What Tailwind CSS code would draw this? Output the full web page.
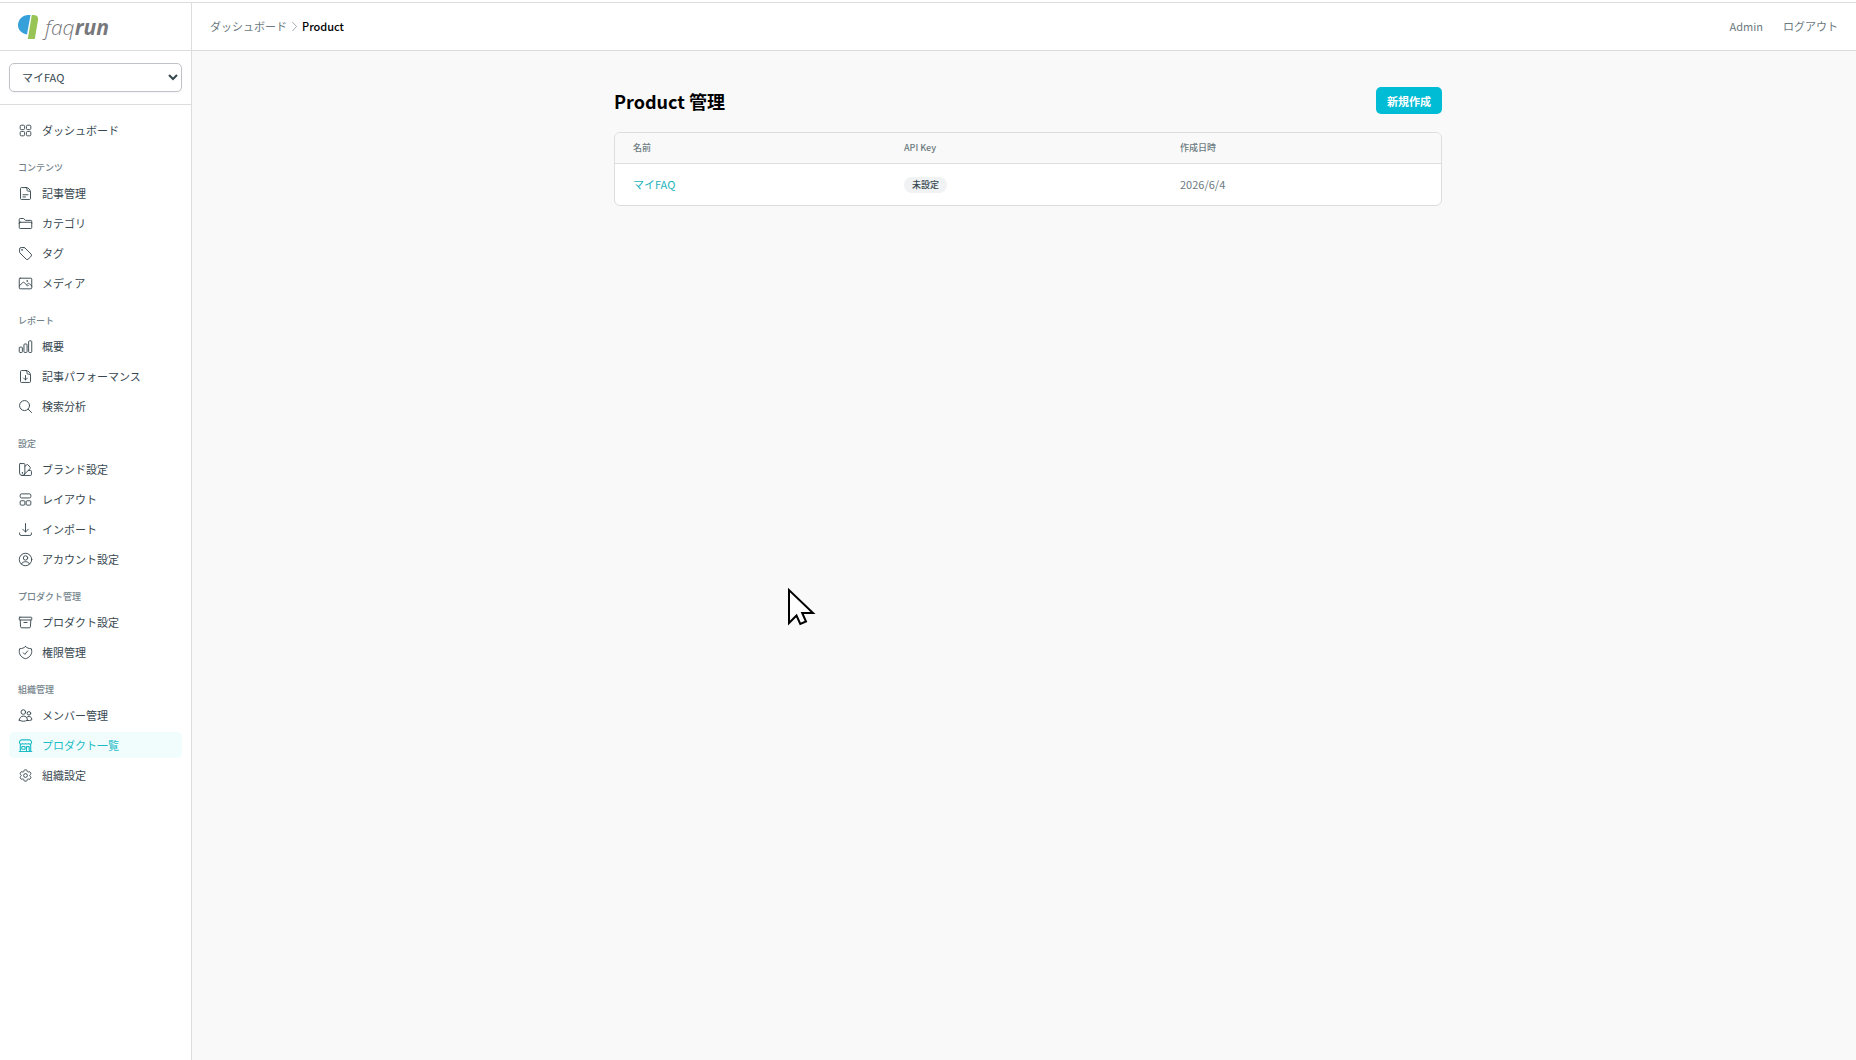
<!DOCTYPE html>
<html lang="ja">
<head>
  <meta charset="UTF-8" />
  <meta name="viewport" content="width=device-width, initial-scale=1.0" />
  <title>Product 管理 - faqrun</title>
  <script src="https://cdn.jsdelivr.net/npm/@tailwindcss/browser@4"></script>
</head>

<body class="min-h-screen flex flex-col bg-[#f9f9f9] text-[11px] leading-4 text-[#37474f] font-['Noto_Sans_CJK_JP',sans-serif]">

  <div class="h-[3px] shrink-0 bg-white border-b border-[#dddddd]"></div>

  <div class="flex flex-1">

    <!-- Sidebar -->
    <aside class="w-48 shrink-0 bg-white border-r border-[#dddddd]">
      <a href="#" aria-label="faqrun" class="flex items-center gap-[7px] h-12 px-[18px] border-b border-[#dddddd]">
        <svg class="w-5 h-6" viewBox="0 0 20 24">
          <path d="M12.500 0 9 19.500C3.500 18.500 0 15 0 10.300 0 4.500 4.500 0 10.500 0Z" fill="#36a0da" />
          <path d="M13.800 0h1.700C18.800 0 20.500 2 20 5L16.800 24H9.800Z" fill="#97c455" />
        </svg>
        <span class="font-['Open_Sans',sans-serif] italic text-[21px] leading-6 text-[#77787b]"><span class="font-light">faq</span><span class="font-bold">run</span></span>
      </a>

      <div class="px-[9px] py-3 border-b border-[#dddddd]">
        <select aria-label="プロダクト" class="block w-full h-[29px] pl-2 pb-px bg-white border border-[#bfc3c8] rounded-[5px] shadow-xs">
          <option>マイFAQ</option>
        </select>
      </div>

      <nav class="px-[9px] pt-3">
        <ul class="space-y-1">
          <li><a href="#" class="flex items-center gap-[9px] h-[26px] px-[9px] rounded-[5px]">
            <svg class="w-[15px] h-[15px]" viewBox="0 0 24 24" fill="none" stroke="currentColor" stroke-width="1.500"><rect x="3.500" y="3.500" width="7" height="7" rx="1.800" /><rect x="13.500" y="3.500" width="7" height="7" rx="1.800" /><rect x="3.500" y="13.500" width="7" height="7" rx="1.800" /><rect x="13.500" y="13.500" width="7" height="7" rx="1.800" /></svg>
            ダッシュボード</a></li>
        </ul>

        <h2 class="h-[17px] mt-[17px] mb-[3px] px-[9px] text-[9px] font-medium text-[#74838b]">コンテンツ</h2>
        <ul class="space-y-1">
          <li><a href="#" class="flex items-center gap-[9px] h-[26px] px-[9px] rounded-[5px]">
            <svg class="w-[15px] h-[15px]" viewBox="0 0 24 24" fill="none" stroke="currentColor" stroke-width="1.500" stroke-linecap="round" stroke-linejoin="round"><path d="M13 2.500H5.500a1.500 1.500 0 0 0-1.500 1.500v16a1.500 1.500 0 0 0 1.500 1.500h13a1.500 1.500 0 0 0 1.500-1.500V10c0-4-3-7.500-7-7.500ZM12.500 2.500c1.500.5 2 1.500 2 3v1.500c0 .8.500 1.200 1.200 1.200H17c1.500 0 2.700.8 3 2M8 14h8M8 17.500h4" /></svg>
            記事管理</a></li>
          <li><a href="#" class="flex items-center gap-[9px] h-[26px] px-[9px] rounded-[5px]">
            <svg class="w-[15px] h-[15px]" viewBox="0 0 24 24" fill="none" stroke="currentColor" stroke-width="1.500" stroke-linecap="round" stroke-linejoin="round"><path d="M2 12V5.500A1.500 1.500 0 0 1 3.500 4h5.300L12 7h8.500A1.500 1.500 0 0 1 22 8.500V12M3.500 10h17a1.500 1.500 0 0 1 1.500 1.500v7a1.500 1.500 0 0 1-1.500 1.500h-17A1.500 1.500 0 0 1 2 18.500v-7A1.500 1.500 0 0 1 3.500 10Z" /></svg>
            カテゴリ</a></li>
          <li><a href="#" class="flex items-center gap-[9px] h-[26px] px-[9px] rounded-[5px]">
            <svg class="w-[15px] h-[15px]" viewBox="0 0 24 24" fill="none" stroke="currentColor" stroke-width="1.500" stroke-linecap="round" stroke-linejoin="round"><path d="M9.500 2.500H5A2.500 2.500 0 0 0 2.500 5v4.500c0 .7.300 1.300.7 1.700l9.800 9.800c.8.800 1.900.900 2.800.3 2.200-1.500 4-3.300 5.500-5.500.6-.9.500-2-.3-2.800L11.200 3.200c-.4-.4-1-.7-1.700-.7Z" /><circle cx="6.300" cy="6.300" r=".5" /></svg>
            タグ</a></li>
          <li><a href="#" class="flex items-center gap-[9px] h-[26px] px-[9px] rounded-[5px]">
            <svg class="w-[15px] h-[15px]" viewBox="0 0 24 24" fill="none" stroke="currentColor" stroke-width="1.500" stroke-linecap="round" stroke-linejoin="round"><rect x="2" y="3.500" width="20" height="17" rx="1.500" /><path d="m2 16 5.200-5.200a2 2 0 0 1 3 0L15.500 16l1-1M14 14l1.500-1.500a2 2 0 0 1 3 0L22 16" /><circle cx="14.500" cy="8" r=".5" /></svg>
            メディア</a></li>
        </ul>

        <h2 class="h-[17px] mt-[17px] mb-[3px] px-[9px] text-[9px] font-medium text-[#74838b]">レポート</h2>
        <ul class="space-y-1">
          <li><a href="#" class="flex items-center gap-[9px] h-[26px] px-[9px] rounded-[5px]">
            <svg class="w-[15px] h-[15px]" viewBox="0 0 24 24" fill="none" stroke="currentColor" stroke-width="1.500"><rect x="2" y="13" width="5" height="8.500" rx="1.200" /><rect x="9.500" y="8" width="5" height="13.500" rx="1.200" /><rect x="17" y="3" width="5" height="18.500" rx="1.200" /></svg>
            概要</a></li>
          <li><a href="#" class="flex items-center gap-[9px] h-[26px] px-[9px] rounded-[5px]">
            <svg class="w-[15px] h-[15px]" viewBox="0 0 24 24" fill="none" stroke="currentColor" stroke-width="1.500" stroke-linecap="round" stroke-linejoin="round"><path d="M13 2.500H5.500a1.500 1.500 0 0 0-1.500 1.500v16a1.500 1.500 0 0 0 1.500 1.500h13a1.500 1.500 0 0 0 1.500-1.500V10c0-4-3-7.500-7-7.500ZM12.500 2.500c1.500.5 2 1.500 2 3v1.500c0 .8.500 1.200 1.200 1.200H17c1.500 0 2.700.8 3 2M12 10.500v7M9 14.500l3 3 3-3" /></svg>
            記事パフォーマンス</a></li>
          <li><a href="#" class="flex items-center gap-[9px] h-[26px] px-[9px] rounded-[5px]">
            <svg class="w-[15px] h-[15px]" viewBox="0 0 24 24" fill="none" stroke="currentColor" stroke-width="1.500" stroke-linecap="round"><circle cx="10.500" cy="10.500" r="8" /><path d="m16.300 16.300 5.500 5.500" /></svg>
            検索分析</a></li>
        </ul>

        <h2 class="h-[17px] mt-[17px] mb-[3px] px-[9px] text-[9px] font-medium text-[#74838b]">設定</h2>
        <ul class="space-y-1">
          <li><a href="#" class="flex items-center gap-[9px] h-[26px] px-[9px] rounded-[5px]">
            <svg class="w-[15px] h-[15px]" viewBox="0 0 24 24" fill="none" stroke="currentColor" stroke-width="1.500" stroke-linecap="round" stroke-linejoin="round"><path d="M3.500 2.500h6A1.500 1.500 0 0 1 11 4v13.500a4 4 0 0 1-4.500 4 4 4 0 0 1-4-4V4a1.500 1.500 0 0 1 1-1.500ZM11 7l3-2.500a1.500 1.500 0 0 1 2 0l3.500 4a1.500 1.500 0 0 1 0 2L9.500 20.300M16.500 13.500H20a1.500 1.500 0 0 1 1.500 1.500v5a1.500 1.500 0 0 1-1.500 1.500H6.500" /><circle cx="6.700" cy="17.500" r=".4" /></svg>
            ブランド設定</a></li>
          <li><a href="#" class="flex items-center gap-[9px] h-[26px] px-[9px] rounded-[5px]">
            <svg class="w-[15px] h-[15px]" viewBox="0 0 24 24" fill="none" stroke="currentColor" stroke-width="1.500"><rect x="3.500" y="3" width="17" height="6.500" rx="2" /><rect x="3.500" y="14" width="7.500" height="7" rx="1.500" /><rect x="13" y="14" width="7.500" height="7" rx="1.500" /></svg>
            レイアウト</a></li>
          <li><a href="#" class="flex items-center gap-[9px] h-[26px] px-[9px] rounded-[5px]">
            <svg class="w-[15px] h-[15px]" viewBox="0 0 24 24" fill="none" stroke="currentColor" stroke-width="1.500" stroke-linecap="round" stroke-linejoin="round"><path d="M2.500 17.500V19A2.500 2.500 0 0 0 5 21.500h14a2.500 2.500 0 0 0 2.500-2.500v-1.500M7.500 11.500 12 16l4.500-4.500M12 16V2.500" /></svg>
            インポート</a></li>
          <li><a href="#" class="flex items-center gap-[9px] h-[26px] px-[9px] rounded-[5px]">
            <svg class="w-[15px] h-[15px]" viewBox="0 0 24 24" fill="none" stroke="currentColor" stroke-width="1.500" stroke-linecap="round"><circle cx="12" cy="12" r="10" /><circle cx="12" cy="9.500" r="3.500" /><path d="M5.500 19c1.300-2.300 3.700-3.500 6.500-3.500s5.200 1.200 6.500 3.500" /></svg>
            アカウント設定</a></li>
        </ul>

        <h2 class="h-[17px] mt-[17px] mb-[3px] px-[9px] text-[9px] font-medium text-[#74838b]">プロダクト管理</h2>
        <ul class="space-y-1">
          <li><a href="#" class="flex items-center gap-[9px] h-[26px] px-[9px] rounded-[5px]">
            <svg class="w-[15px] h-[15px]" viewBox="0 0 24 24" fill="none" stroke="currentColor" stroke-width="1.500" stroke-linecap="round" stroke-linejoin="round"><rect x="2" y="3.500" width="20" height="4.500" rx="1" /><path d="m3.500 8 .6 10.700a2 2 0 0 0 2 1.800h11.800a2 2 0 0 0 2-1.800L20.500 8M9.500 12h5" /></svg>
            プロダクト設定</a></li>
          <li><a href="#" class="flex items-center gap-[9px] h-[26px] px-[9px] rounded-[5px]">
            <svg class="w-[15px] h-[15px]" viewBox="0 0 24 24" fill="none" stroke="currentColor" stroke-width="1.500" stroke-linecap="round" stroke-linejoin="round"><path d="M12 2.500c-2.500 2.300-5.700 3.500-9.300 3.400-.5 1.500-.7 2.900-.7 4.400 0 5.500 4 10 10 11.700 6-1.700 10-6.200 10-11.700 0-1.500-.2-2.900-.7-4.400-3.600.1-6.800-1.100-9.300-3.400ZM8.500 12.500l2.500 2.500 4.500-5.500" /></svg>
            権限管理</a></li>
        </ul>

        <h2 class="h-[17px] mt-[17px] mb-[3px] px-[9px] text-[9px] font-medium text-[#74838b]">組織管理</h2>
        <ul class="space-y-1">
          <li><a href="#" class="flex items-center gap-[9px] h-[26px] px-[9px] rounded-[5px]">
            <svg class="w-[15px] h-[15px]" viewBox="0 0 24 24" fill="none" stroke="currentColor" stroke-width="1.500" stroke-linecap="round" stroke-linejoin="round"><circle cx="8.500" cy="6.500" r="3.700" /><circle cx="17.500" cy="8.500" r="2.800" /><path d="M2 19.500a6.500 6.500 0 0 1 13 0c-4 2.300-9 2.300-13 0ZM15 20c2.500.3 4.800 0 7-1a4.700 4.700 0 0 0-8.500-3.500" /></svg>
            メンバー管理</a></li>
          <li><a href="#" aria-current="page" class="flex items-center gap-[9px] h-[26px] px-[9px] rounded-[5px] bg-[#f1fdfd] text-[#1cbcc6]">
            <svg class="w-[15px] h-[15px]" viewBox="0 0 24 24" fill="none" stroke="currentColor" stroke-width="1.800" stroke-linecap="round" stroke-linejoin="round"><path d="M13.500 21.500v-7a.8.8 0 0 1 .8-.8h3a.8.8 0 0 1 .7.8v7M2 21.500h20M3.700 21.500V9.400M20.300 21.500V9.400M3.700 9.400a3 3 0 0 0 3.800-.6 3 3 0 0 0 4.500 0 3 3 0 0 0 4.500 0 3 3 0 0 0 3.800.6 3 3 0 0 0 .6-4.700l-1.200-1.200a1.500 1.500 0 0 0-1-.5H5.300a1.500 1.500 0 0 0-1 .5L3.100 4.700a3 3 0 0 0 .6 4.700ZM6.700 18h3.800a.7.700 0 0 0 .7-.7v-3a.7.700 0 0 0-.7-.7H6.700a.7.700 0 0 0-.7.700v3c0 .4.300.7.700.7Z" /></svg>
            プロダクト一覧</a></li>
          <li><a href="#" class="flex items-center gap-[9px] h-[26px] px-[9px] rounded-[5px]">
            <svg class="w-[15px] h-[15px]" viewBox="0 0 24 24" fill="none" stroke="currentColor" stroke-width="1.500" stroke-linejoin="round"><path d="M9.600 3.900c.1-.5.600-.9 1.100-.9h2.600c.5 0 1 .4 1.100.9l.2 1.300c.1.400.3.700.6.900l.3.200c.3.200.7.200 1.100.1l1.200-.5c.5-.2 1.100 0 1.400.5l1.300 2.200c.3.500.2 1.100-.3 1.400l-1 .9c-.3.200-.4.600-.4.900v.4c0 .4.100.7.400.9l1 .9c.4.300.5.900.3 1.400l-1.300 2.200c-.3.500-.9.700-1.400.5l-1.200-.5c-.4-.1-.8-.1-1.100.1l-.3.200c-.3.200-.5.500-.6.900l-.2 1.300c-.1.500-.6.900-1.100.9h-2.600c-.5 0-1-.4-1.100-.9l-.2-1.300c-.1-.4-.3-.7-.6-.9l-.3-.2c-.3-.2-.7-.2-1.100-.1l-1.200.5c-.5.2-1.100 0-1.400-.5l-1.300-2.200c-.3-.5-.2-1.100.3-1.400l1-.9c.3-.2.400-.6.400-.9v-.4c0-.4-.1-.7-.4-.9l-1-.9c-.4-.3-.5-.9-.3-1.400l1.300-2.200c.3-.5.9-.7 1.400-.5l1.200.5c.4.100.8.100 1.100-.1l.3-.2c.3-.2.500-.5.600-.9Z" /><circle cx="12" cy="12" r="3" /></svg>
            組織設定</a></li>
        </ul>
      </nav>
    </aside>

    <div class="flex-1 min-w-0">
      <!-- Top bar -->
      <header class="flex items-center justify-between h-12 px-[18px] pb-px bg-white border-b border-[#dddddd] text-[#6b7980]">
        <nav class="flex items-center gap-[2px]">
          <a href="#">ダッシュボード</a>
          <svg class="w-[11px] h-[11px] text-gray-400" viewBox="0 0 24 24" fill="none" stroke="currentColor" stroke-width="2" stroke-linecap="round" stroke-linejoin="round"><path d="m8 3 8.500 9L8 21" /></svg>
          <span class="font-medium text-black">Product</span>
        </nav>
        <div class="flex items-center gap-5">
          <span>Admin</span>
          <button type="button">ログアウト</button>
        </div>
      </header>

      <main class="pl-2 pt-9">
        <div class="max-w-[828px] mx-auto">
          <div class="flex items-start justify-between mb-4">
            <h1 class="text-[18px] leading-[29px] font-bold text-black">Product 管理</h1>
            <button type="button" class="h-[27px] px-[11px] rounded-[5px] bg-[#00bcd4] text-white font-bold">新規作成</button>
          </div>

          <!-- Product list -->
          <div class="bg-white border border-[#dddddd] rounded-md overflow-hidden">
            <table class="w-full table-fixed text-left">
              <thead class="bg-[#f9f9f9] text-[9px] text-[#6b7980]">
                <tr class="h-[30px] border-b border-[#dddddd]">
                  <th class="w-[271px] px-[18px] font-medium">名前</th>
                  <th class="w-[276px] px-[18px] font-medium">API Key</th>
                  <th class="px-[18px] font-medium">作成日時</th>
                </tr>
              </thead>
              <tbody>
                <tr class="h-[42px]">
                  <td class="px-[18px]"><a href="#" class="text-[#1cb4bd]">マイFAQ</a></td>
                  <td class="px-[18px]"><span class="inline-block px-2 rounded-full bg-[#f0f2f3] text-[9px] font-medium">未設定</span></td>
                  <td class="px-[18px] text-[#6b7980]">2026/6/4</td>
                </tr>
              </tbody>
            </table>
          </div>
        </div>
      </main>
    </div>
  </div>

  <!-- Mouse pointer -->
  <svg class="absolute left-[787px] top-[586px] w-[29px] h-10 pointer-events-none" viewBox="0 0 29 40" fill="#fff" stroke="#000" stroke-width="2"><path d="M2 4v33l7.500-7.500 3.800 8.500 5.700-2.500-3.800-8.500H26Z" /></svg>
</body>

</html>
